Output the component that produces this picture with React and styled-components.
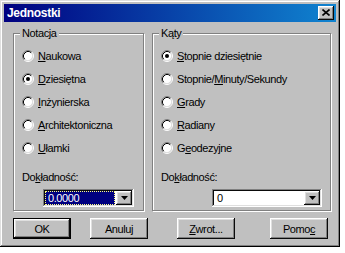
import React from 'react';
import styled, { createGlobalStyle } from 'styled-components';

const Global = createGlobalStyle`
  html, body { margin: 0; padding: 0; background: #fff; }
  body {
    font-family: "Liberation Sans", Arial, sans-serif;
    font-size: 11px;
    letter-spacing: -0.4px;
    color: #000;
  }
`;

const raised = `
  box-shadow: inset -1px -1px #0a0a0a, inset 1px 1px #fff,
    inset -2px -2px #808080, inset 2px 2px #dfdfdf;
`;

const sunken = `
  box-shadow: inset -1px -1px #fff, inset 1px 1px #808080,
    inset -2px -2px #dfdfdf, inset 2px 2px #0a0a0a;
`;

const Window = styled.div`
  box-sizing: border-box;
  width: 340px;
  height: 247px;
  padding: 4px;
  background: #c0c0c0;
  box-shadow: inset -1px -1px #000, inset 1px 1px #dfdfdf,
    inset -2px -2px #808080, inset 2px 2px #fff;
  display: flex;
  flex-direction: column;
`;

const TitleBar = styled.div`
  height: 18px;
  display: flex;
  align-items: center;
  justify-content: space-between;
  padding: 0 2px 0 3px;
  background: linear-gradient(90deg, #000080 0%, #1084d0 100%);
`;

const Title = styled.span`
  color: #fff;
  font-weight: bold;
  font-size: 12px;
  letter-spacing: -0.3px;
  line-height: 14px;
`;

const CloseButton = styled.div`
  box-sizing: border-box;
  width: 16px;
  height: 14px;
  background: #c0c0c0;
  ${raised}
  display: flex;
  align-items: center;
  justify-content: center;
  padding-bottom: 1px;
`;

const Content = styled.div`
  display: flex;
  flex-direction: column;
  padding: 11px 0 0 9px;
`;

const GroupRow = styled.div`
  display: flex;
  gap: 8px;
`;

const Group = styled.div`
  position: relative;
  box-sizing: border-box;
  width: ${(p) => p.$w}px;
  height: 178px;
  border: 1px solid #808080;
  box-shadow: inset 1px 1px #fff, 1px 1px #fff;
  display: flex;
  flex-direction: column;
  padding: 10px 0 0 8px;
`;

const Legend = styled.span`
  position: absolute;
  top: -7px;
  left: 6px;
  padding: 0 2px;
  background: #c0c0c0;
  line-height: 12px;
`;

const RadioRow = styled.div`
  height: 23px;
  display: flex;
  align-items: center;
  gap: 4px;
`;

const Label = styled.span`
  line-height: 12px;
  white-space: nowrap;
`;

const FieldLabel = styled.div`
  margin-top: 12px;
  line-height: 12px;
`;

const Combo = styled.div`
  box-sizing: border-box;
  align-self: flex-end;
  margin-right: ${(p) => p.$mr}px;
  margin-top: 6px;
  width: ${(p) => p.$w}px;
  height: 18px;
  padding: 2px;
  background: #fff;
  ${sunken}
  display: flex;
`;

const ComboValue = styled.div`
  flex: 1;
  box-sizing: border-box;
  margin-right: 1px;
  padding-left: 2px;
  line-height: 12px;
  display: flex;
  align-items: center;
  background: ${(p) => (p.$focused ? '#000080' : 'transparent')};
  color: ${(p) => (p.$focused ? '#fff' : '#000')};
  border: 1px dotted ${(p) => (p.$focused ? '#ffff7f' : 'transparent')};
`;

const DropButton = styled.div`
  box-sizing: border-box;
  width: 16px;
  height: 14px;
  background: #c0c0c0;
  ${raised}
  display: flex;
  align-items: center;
  justify-content: center;
`;

const ButtonRow = styled.div`
  display: flex;
  margin-top: 7px;
`;

const Button = styled.div`
  box-sizing: border-box;
  width: 58px;
  height: 21px;
  margin-left: ${(p) => p.$ml || 0}px;
  background: #c0c0c0;
  ${raised}
  ${(p) =>
    p.$default
      ? `box-shadow: inset 0 0 0 1px #000, inset -2px -2px #0a0a0a, inset 2px 2px #fff,
    inset -3px -3px #808080, inset 3px 3px #dfdfdf;`
      : ''}
  display: flex;
  align-items: center;
  justify-content: center;
  line-height: 12px;
`;

const Radio = ({ checked }) => (
  <svg width="12" height="12" viewBox="0 0 12 12">
    <circle cx="6" cy="6" r="4.5" fill="#fff" />
    <path d="M2.11 9.89 A5.5 5.5 0 0 1 9.89 2.11" fill="none" stroke="#808080" />
    <path d="M9.89 2.11 A5.5 5.5 0 0 1 2.11 9.89" fill="none" stroke="#fff" />
    <path d="M2.82 9.18 A4.5 4.5 0 0 1 9.18 2.82" fill="none" stroke="#000" />
    <path d="M9.18 2.82 A4.5 4.5 0 0 1 2.82 9.18" fill="none" stroke="#dfdfdf" />
    {checked && <circle cx="6" cy="6" r="2" fill="#000" />}
  </svg>
);

const Arrow = () => (
  <svg width="7" height="4" viewBox="0 0 7 4">
    <path d="M0 0 H7 L3.5 4 Z" fill="#000" />
  </svg>
);

const CloseX = () => (
  <svg width="8" height="7" viewBox="0 0 8 7">
    <path d="M0.5 0.5 L7.5 6.5 M7.5 0.5 L0.5 6.5" stroke="#000" strokeWidth="1.6" />
  </svg>
);

const Option = ({ checked, children }) => (
  <RadioRow>
    <Radio checked={checked} />
    <Label>{children}</Label>
  </RadioRow>
);

export default function App() {
  return (
    <>
      <Global />
      <Window>
        <TitleBar>
          <Title>Jednostki</Title>
          <CloseButton>
            <CloseX />
          </CloseButton>
        </TitleBar>
        <Content>
          <GroupRow>
            <Group $w={131}>
              <Legend>Notacja</Legend>
              <Option><u>N</u>aukowa</Option>
              <Option checked><u>D</u>ziesiętna</Option>
              <Option><u>I</u>nżynierska</Option>
              <Option><u>A</u>rchitektoniczna</Option>
              <Option><u>U</u>łamki</Option>
              <FieldLabel>Do<u>k</u>ładność:</FieldLabel>
              <Combo $w={91} $mr={9}>
                <ComboValue $focused>0.0000</ComboValue>
                <DropButton>
                  <Arrow />
                </DropButton>
              </Combo>
            </Group>
            <Group $w={179}>
              <Legend>Kąty</Legend>
              <Option checked><u>S</u>topnie dziesiętnie</Option>
              <Option>Stopnie/<u>M</u>inuty/Sekundy</Option>
              <Option><u>G</u>rady</Option>
              <Option><u>R</u>adiany</Option>
              <Option>G<u>e</u>odezyjne</Option>
              <FieldLabel>Do<u>k</u>ładność:</FieldLabel>
              <Combo $w={110} $mr={8}>
                <ComboValue>0</ComboValue>
                <DropButton>
                  <Arrow />
                </DropButton>
              </Combo>
            </Group>
          </GroupRow>
          <ButtonRow>
            <Button $default>OK</Button>
            <Button $ml={19}>Anuluj</Button>
            <Button $ml={29}><span><u>Z</u>wrot...</span></Button>
            <Button $ml={35}><span>Pomo<u>c</u></span></Button>
          </ButtonRow>
        </Content>
      </Window>
    </>
  );
}
